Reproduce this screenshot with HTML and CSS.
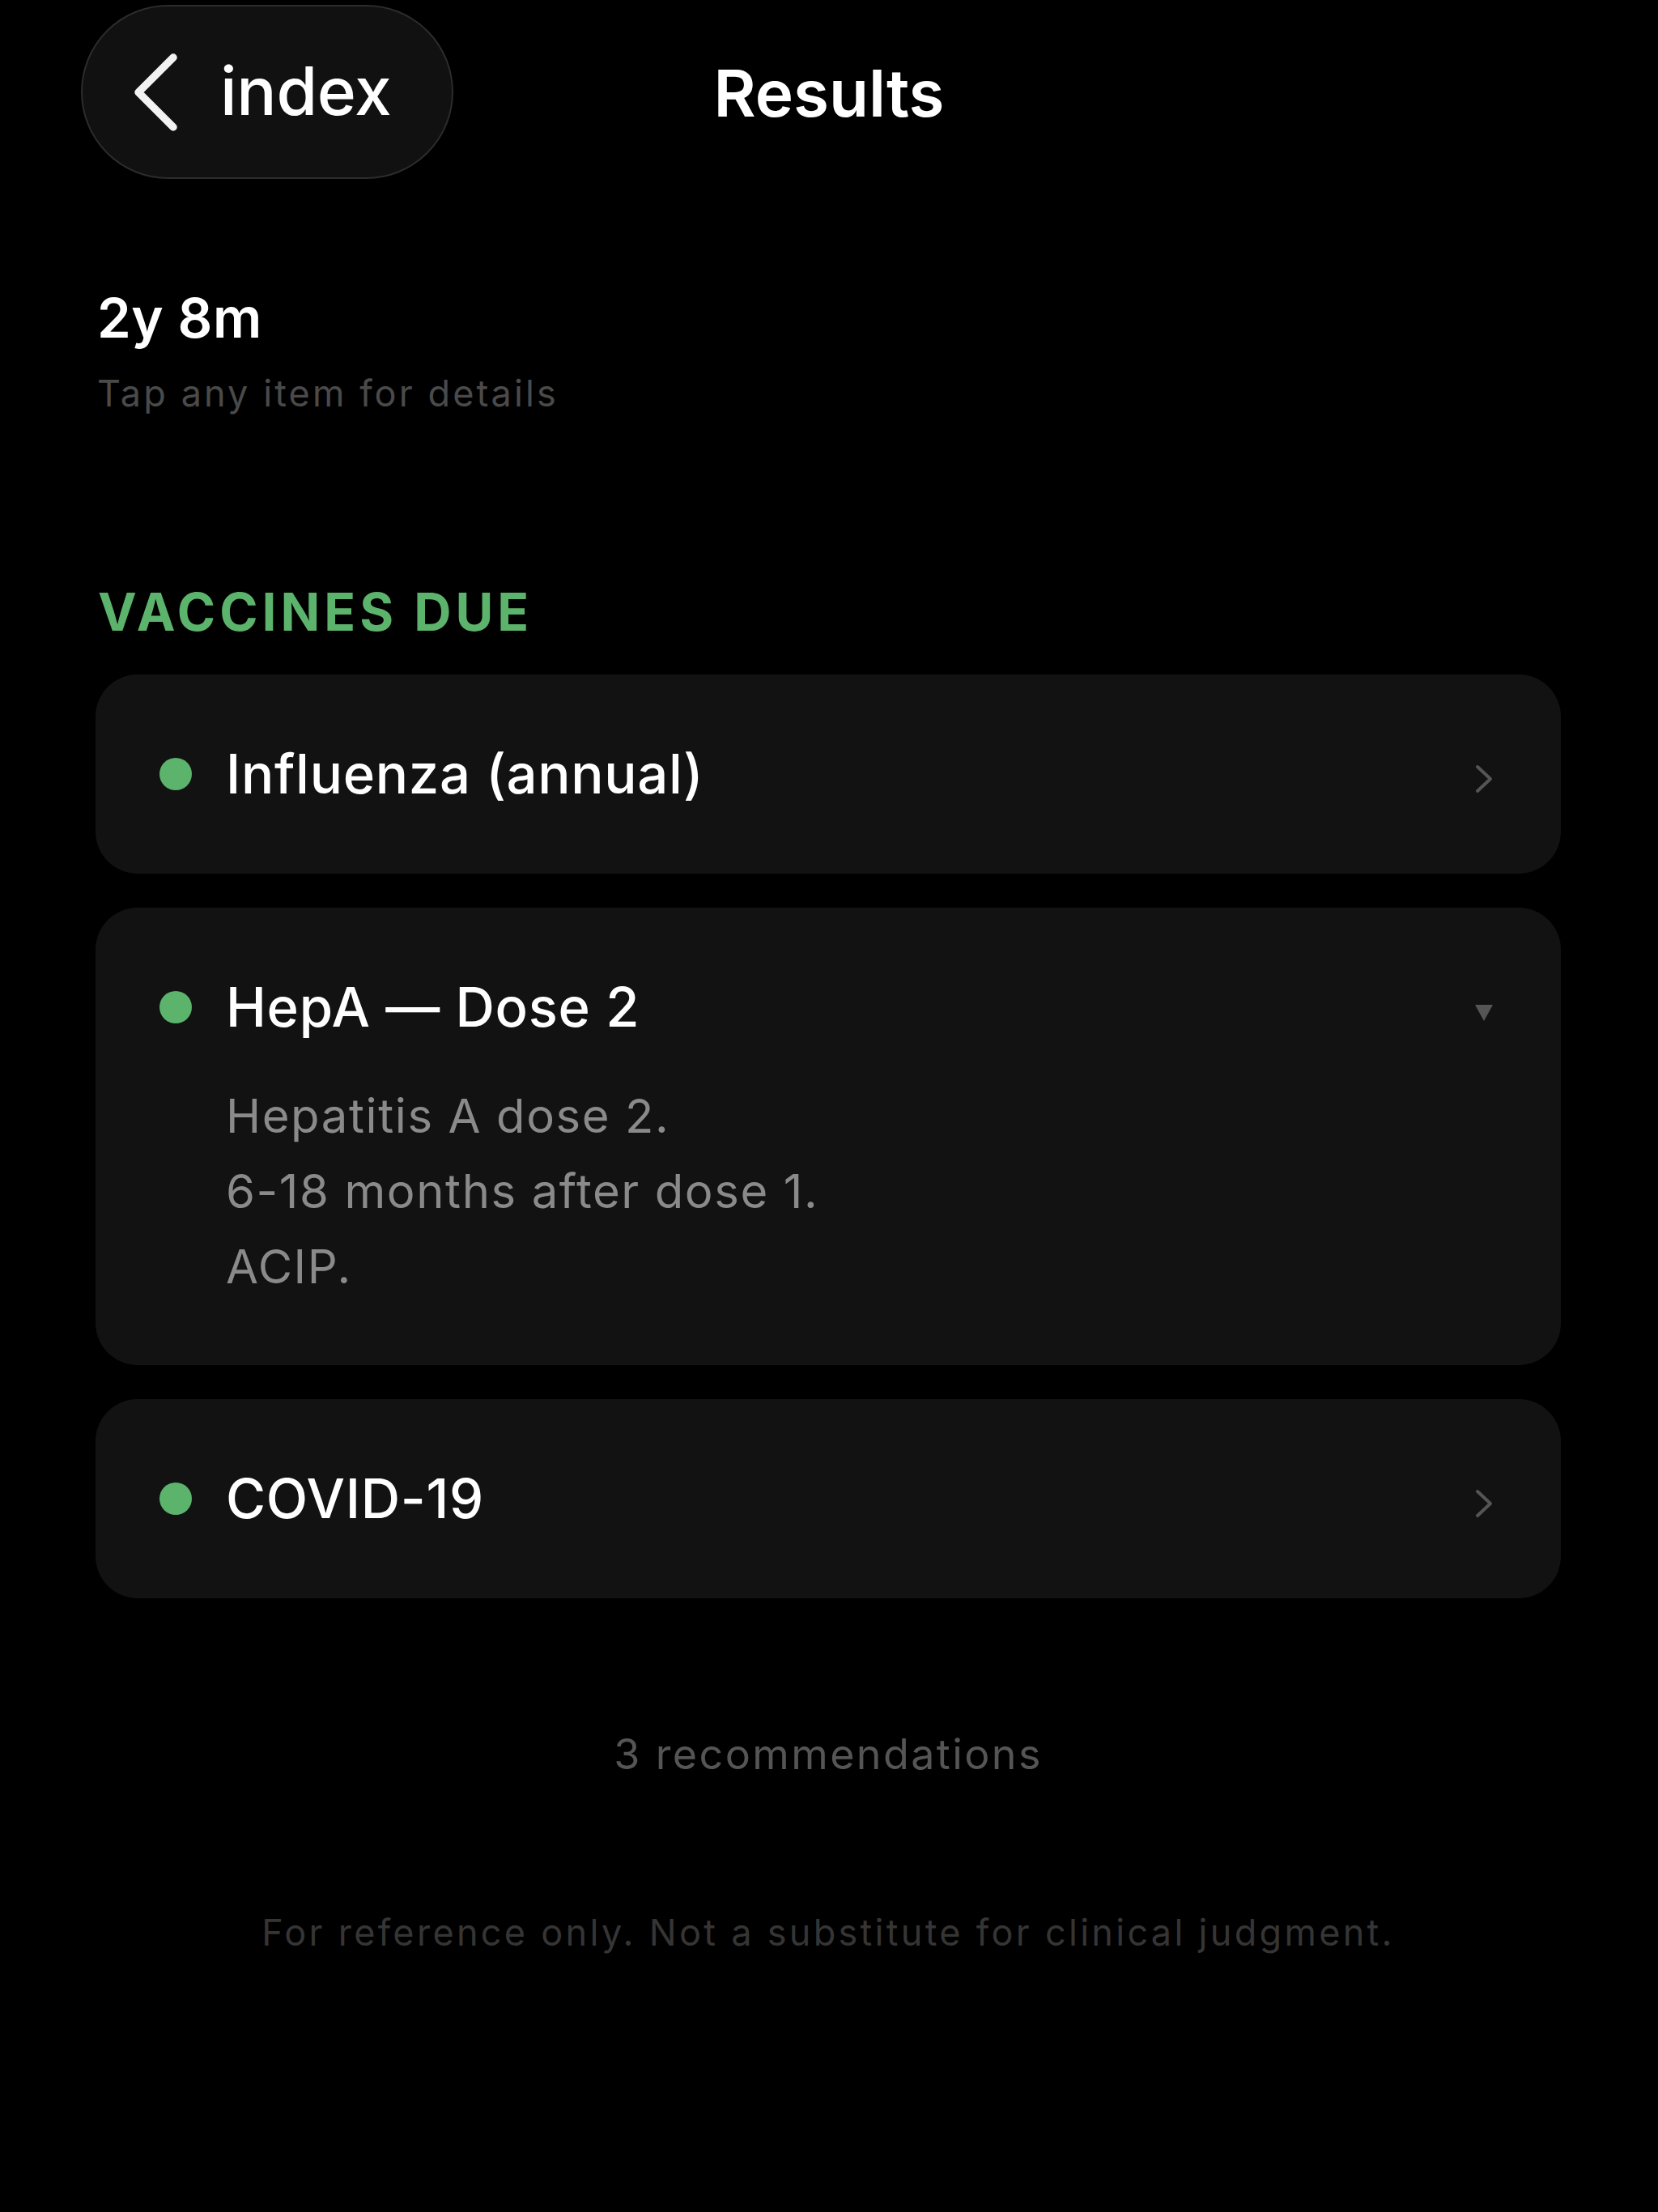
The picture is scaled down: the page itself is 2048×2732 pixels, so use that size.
FILE: index.html
```html
<!DOCTYPE html>
<html lang="en">
<head>
<meta charset="utf-8">
<title>Results</title>
<link rel="stylesheet" href="styles.css">
</head>
<body>
<div class="screen">
  <header class="nav">
    <div class="nav-left">
      <button class="back">
        <svg class="back-chev" width="60" height="100" viewBox="0 0 60 100"><polyline points="50,7 7,50 50,93" fill="none" stroke="#f2f2f2" stroke-width="9.5" stroke-linecap="round" stroke-linejoin="round"/></svg>
        <span class="back-label">index</span>
      </button>
    </div>
    <h1 class="title">Results</h1>
    <div class="nav-right"></div>
  </header>

  <main class="content">
    <section class="summary">
      <div class="age">2y 8m</div>
      <div class="hint">Tap any item for details</div>
    </section>

    <section class="group">
      <h2 class="group-label">VACCINES DUE</h2>
      <div class="list">
        <div class="card">
          <div class="row">
            <span class="dot"></span>
            <span class="name">Influenza (annual)</span>
            <svg class="chev" width="24" height="36" viewBox="0 0 24 36"><polyline points="4,3 20,18 4,33" fill="none" stroke="#555" stroke-width="4" stroke-linecap="round" stroke-linejoin="round"/></svg>
          </div>
        </div>
        <div class="card">
          <div class="row">
            <span class="dot"></span>
            <span class="name">HepA — Dose 2</span>
            <svg class="tri" width="24" height="22" viewBox="0 0 24 22"><polygon points="1,1 23,1 12,21" fill="#555"/></svg>
          </div>
          <div class="details">
            <div>Hepatitis A dose 2.</div>
            <div>6-18 months after dose 1.</div>
            <div>ACIP.</div>
          </div>
        </div>
        <div class="card">
          <div class="row">
            <span class="dot"></span>
            <span class="name">COVID-19</span>
            <svg class="chev" width="24" height="36" viewBox="0 0 24 36"><polyline points="4,3 20,18 4,33" fill="none" stroke="#555" stroke-width="4" stroke-linecap="round" stroke-linejoin="round"/></svg>
          </div>
        </div>
      </div>
    </section>

    <div class="count">3 recommendations</div>
    <div class="disclaimer">For reference only. Not a substitute for clinical judgment.</div>
  </main>
</div>
</body>
</html>
```

FILE: styles.css
```css
html, body {
  margin: 0;
  padding: 0;
  background: #000;
}

body {
  width: 2048px;
  min-height: 2732px;
  font-family: Inter, "Noto Sans", "Liberation Sans", sans-serif;
  color: #fff;
}

.screen {
  display: flex;
  flex-direction: column;
}

.nav {
  display: grid;
  grid-template-columns: 1fr auto 1fr;
  align-items: center;
  padding: 6px 100px 0 100px;
  height: 215px;
}

.nav-left {
  display: flex;
}

.back {
  display: flex;
  align-items: center;
  gap: 48px;
  box-sizing: border-box;
  width: 460px;
  height: 215px;
  padding: 0 0 0 62px;
  border-radius: 108px;
  border: 2px solid #2c2c2c;
  background: #111;
  color: #fff;
  font: inherit;
  cursor: pointer;
}

.back-chev {
  display: block;
  flex: none;
}

.back-label {
  font-size: 82px;
  font-weight: 500;
  line-height: 1;
  letter-spacing: -0.3px;
  margin-top: -2px;
}

.title {
  margin: 0;
  font-size: 80px;
  font-weight: 600;
  letter-spacing: 0px;
  line-height: 1;
  margin-top: 2px;
}

.content {
  display: flex;
  flex-direction: column;
  padding: 0 120px 0 118px;
}

.summary {
  display: flex;
  flex-direction: column;
  padding-left: 2px;
  margin-top: 132px;
  gap: 26px;
}

.age {
  font-size: 67px;
  font-weight: 600;
  line-height: 80px;
  letter-spacing: 0.5px;
}

.hint {
  font-size: 45px;
  line-height: 54px;
  letter-spacing: 3.1px;
  color: #4a4a4a;
}

.group {
  margin-top: 204px;
  display: flex;
  flex-direction: column;
  gap: 39px;
}

.group-label {
  margin: 0;
  padding-left: 3px;
  font-size: 64px;
  line-height: 77px;
  font-weight: 700;
  letter-spacing: 5px;
  color: #5cb36c;
}

.list {
  display: flex;
  flex-direction: column;
  gap: 42px;
}

.card {
  background: #121212;
  border-radius: 52px;
  padding: 80px 83px 80px 79px;
  display: flex;
  flex-direction: column;
  gap: 45px;
}

.card .details {
  margin-bottom: -5px;
}

.row {
  display: flex;
  align-items: center;
  height: 86px;
}

.dot {
  flex: none;
  width: 40px;
  height: 40px;
  border-radius: 50%;
  background: #5cb36c;
  margin-right: 42px;
}

.name {
  flex: 1;
  font-size: 67px;
  font-weight: 500;
  line-height: 86px;
  letter-spacing: 0.7px;
}

.chev, .tri {
  flex: none;
  display: block;
}

.chev {
  margin-top: 12px;
}

.tri {
  margin-top: 14px;
}

.details {
  padding-left: 82px;
  font-size: 58px;
  line-height: 93px;
  color: #8a8a8a;
  letter-spacing: 1.6px;
}

.count {
  margin-top: 161px;
  text-align: center;
  font-size: 52px;
  line-height: 63px;
  letter-spacing: 2.4px;
  color: #555;
}

.disclaimer {
  margin-top: 162px;
  text-align: center;
  font-size: 45px;
  line-height: 54px;
  letter-spacing: 3.3px;
  color: #353535;
}
```
